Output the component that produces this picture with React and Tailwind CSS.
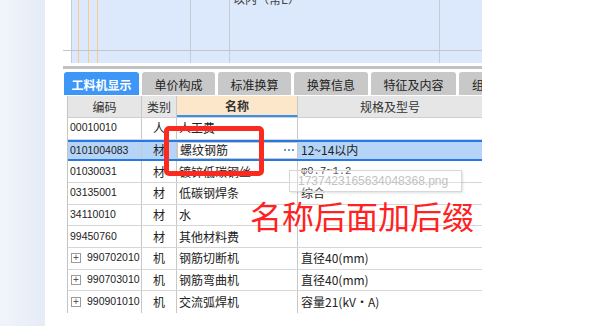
import React from 'react';

const topCols = [
  { w: 'w-[7px]', line: 'border-[#fbc98c]' },
  { w: 'w-[10px]', line: 'border-[#fbc98c]' },
  { w: 'w-[9px]', line: 'border-[#fbc98c]' },
  { w: 'w-[93px]', line: 'border-[#c6ccd6]' },
  { w: 'w-[39px]', line: 'border-[#c6ccd6]' },
  { w: 'w-[210px]', line: 'border-[#c6ccd6]' },
  { w: 'w-[42px]', line: 'border-transparent' },
];

const tabs = [
  { label: '工料机显示', w: 'w-[75px]', active: true },
  { label: '单价构成', w: 'w-[73px]' },
  { label: '标准换算', w: 'w-[73px]' },
  { label: '换算信息', w: 'w-[74px]' },
  { label: '特征及内容', w: 'w-[85px]' },
  { label: '组成', w: 'w-[50px]' },
];

const rows = [
  { code: '00010010', type: '人', name: '人工费', spec: '' },
  { code: '0101004083', type: '材', name: '螺纹钢筋', spec: '12~14以内', selected: true },
  { code: '01030031', type: '材', name: '镀锌低碳钢丝', spec: 'φ0.7~1.2', mono: true },
  { code: '03135001', type: '材', name: '低碳钢焊条', spec: '综合' },
  { code: '34110010', type: '材', name: '水', spec: '' },
  { code: '99450760', type: '材', name: '其他材料费', spec: '' },
  { code: '990702010', type: '机', name: '钢筋切断机', spec: '直径40(mm)', plus: true },
  { code: '990703010', type: '机', name: '钢筋弯曲机', spec: '直径40(mm)', plus: true },
  { code: '990901010', type: '机', name: '交流弧焊机', spec: '容量21(kV·A)', plus: true, last: true },
];

const TopStrip = ({ h, children }) => (
  <div className={`flex ${h}`}>
    <div className="w-[9px]" />
    <div className="flex bg-[#dce9fc] border-l border-[#c6ccd6]">
      {topCols.map((c, i) => (
        <div key={i} className={`${c.w} border-r ${c.line} overflow-hidden`}>
          {i === 5 && children}
        </div>
      ))}
    </div>
  </div>
);

export default function App() {
  return (
    <div className="flex w-[606px] h-[326px] overflow-hidden bg-white font-['Noto_Sans_CJK_SC',sans-serif] text-[12px] text-[#222]">
      <div className="w-[45px] shrink-0 bg-linear-to-r from-[#f1f5fb] to-[#e5ecf6]" />
      <div className="w-[18px] shrink-0" />

      <div className="relative w-[419px] shrink-0 flex flex-col">
        {/* upper grid, scrolled out of view */}
        <TopStrip h="h-[50px]">
          <div className="pl-[3px] -mt-[7px] leading-[12px] text-[#444]">以内（常E）</div>
        </TopStrip>
        <div className="h-px bg-[#c3c7cd]" />
        <TopStrip h="h-[12px]" />

        <div className="h-[3px]" />
        <div className="h-[3px] bg-[#c2c2c2]" />
        <div className="h-[3px]" />

        {/* tabs */}
        <div className="flex gap-[3px] h-[23px] pl-[1px] overflow-hidden">
          {tabs.map((t) => (
            <div
              key={t.label}
              className={`${t.w} shrink-0 rounded-t-[3px] flex items-center justify-center pt-[2px] text-[12px] ${
                t.active ? 'bg-[#3e96f6] text-white font-bold' : 'bg-[#c8c8c8] text-[#222]'
              }`}
            >
              {t.label}
            </div>
          ))}
        </div>
        <div className="h-px" />

        {/* table */}
        <div className="ml-[4px] w-[415px] flex flex-col border-l border-[#c4c4c4]">
          <div className="flex h-[22px] bg-[#e6e6e6] border-b border-[#cfcfcf] text-[#333]">
            <div className="w-[74px] border-r border-[#c8c8c8] flex items-center justify-center">编码</div>
            <div className="w-[35px] border-r border-[#c8c8c8] flex items-center justify-center">类别</div>
            <div className="w-[121px] border-r border-[#c8c8c8] bg-[#fde7cb] border-b-2 border-b-[#3d8ee9] flex items-center justify-center font-bold">
              名称
            </div>
            <div className="flex-1 flex items-center justify-center">规格及型号</div>
          </div>

          {rows.map((r) => (
            <div
              key={r.code}
              className={`flex h-[21.67px] ${
                r.selected
                  ? 'bg-[#b5d4f8] border-y-2 border-[#2479e4]'
                  : r.last
                  ? ''
                  : 'border-b border-[#d6d6d6]'
              }`}
            >
              <div className="w-[74px] border-r border-[#c8c8c8] flex items-center pl-[2px] font-['Liberation_Sans',sans-serif] text-[10.5px]">
                {r.plus && (
                  <span className="w-[10px] h-[10px] mr-[6px] ml-[1px] border border-[#9c9c9c] flex items-center justify-center text-[10px] leading-none text-[#555]">
                    +
                  </span>
                )}
                {r.code}
              </div>
              <div className="w-[35px] border-r border-[#c8c8c8] flex items-center justify-center">{r.type}</div>
              <div
                className={`w-[121px] border-r border-[#c8c8c8] flex items-center pl-[2px] ${
                  r.selected ? 'bg-white border border-[#2479e4] justify-between pr-[3px]' : ''
                }`}
              >
                <span>{r.name}</span>
                {r.selected && (
                  <span className="flex gap-[2px] items-center">
                    <span className="w-[2px] h-[2px] bg-[#5b9be8]" />
                    <span className="w-[2px] h-[2px] bg-[#5b9be8]" />
                    <span className="w-[2px] h-[2px] bg-[#5b9be8]" />
                  </span>
                )}
              </div>
              <div
                className={`flex-1 flex items-center pl-[3px] ${
                  r.mono ? "font-['Liberation_Mono',monospace] text-[10.5px]" : ''
                }`}
              >
                {r.spec}
              </div>
            </div>
          ))}
        </div>

        {/* dragged image ghost */}
        <div className="absolute left-[226px] top-[170px] w-[173px] h-[22px] border border-[#d8d8d8] bg-white/30 shadow-[1px_1px_2px_rgba(0,0,0,0.12)] flex items-center pl-[8px] font-['Liberation_Sans',sans-serif] text-[12px] text-[#c2c2c2]">
          1737423165634048368.png
        </div>

        {/* annotation */}
        <div className="absolute left-[101px] top-[126px] w-[100px] h-[50px] border-[5px] border-[#fa2a20] rounded-[5px]" />
        <div className="absolute left-[187px] top-[199px] text-[32px] leading-none text-[#ff2222] whitespace-nowrap">
          名称后面加后缀
        </div>
      </div>
    </div>
  );
}
